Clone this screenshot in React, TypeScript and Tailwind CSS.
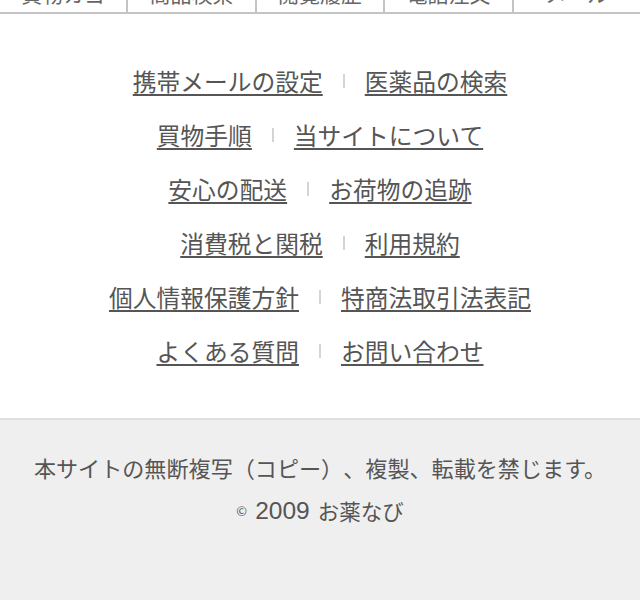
import React from "react";

const tabs = ["買物カゴ", "商品検索", "閲覧履歴", "電話注文", "メール"];

const rows: [string, string][] = [
  ["携帯メールの設定", "医薬品の検索"],
  ["買物手順", "当サイトについて"],
  ["安心の配送", "お荷物の追跡"],
  ["消費税と関税", "利用規約"],
  ["個人情報保護方針", "特商法取引法表記"],
  ["よくある質問", "お問い合わせ"],
];

export default function App() {
  return (
    <div
      className="flex flex-col min-h-[600px] bg-white text-[#555] [text-spacing-trim:space-all]"
      style={{ fontFamily: '"Noto Sans CJK JP", "Noto Sans", sans-serif' }}
    >
      {/* tab bar (cut off at top) */}
      <nav className="flex h-[14px] overflow-hidden border-b-2 border-[#c4c4c4]">
        {tabs.map((t, i) => (
          <div
            key={t}
            className={`flex-1 flex justify-center items-end ${
              i < tabs.length - 1 ? "border-r-2 border-[#c4c4c4]" : ""
            }`}
          >
            <span className="text-[21px] leading-none text-[#666] mb-[8px]">{t}</span>
          </div>
        ))}
      </nav>

      {/* footer links */}
      <section className="pt-[40px] pb-[40px]">
        {rows.map(([a, b]) => (
          <div key={a} className="flex h-[54px] items-center justify-center gap-[20px]">
            <a href="#" className="text-[23.75px] leading-none underline underline-offset-[3px] decoration-[1.5px] decoration-[#555]">
              {a}
            </a>
            <span className="w-[2px] h-[14px] bg-[#d4d4d4]" />
            <a href="#" className="text-[23.75px] leading-none underline underline-offset-[3px] decoration-[1.5px] decoration-[#555]">
              {b}
            </a>
          </div>
        ))}
      </section>

      {/* copyright */}
      <footer className="flex-1 border-t-2 border-[#e0e0e0] bg-[#efefef] pt-[32px] flex flex-col items-center">
        <p className="text-[22.1px] leading-[30px] text-[#555]">
          本サイトの無断複写（コピー）、複製、転載を禁じます。
        </p>
        <p className="mt-[14px] text-[21.5px] leading-[30px] text-[#555] flex items-center">
          <span className="text-[13px] mr-[8px]">©</span>
          <span className="text-[24.5px] mr-[8px]" style={{ fontFamily: '"Liberation Sans", sans-serif' }}>
            2009
          </span>
          <span>お薬なび</span>
        </p>
      </footer>
    </div>
  );
}
